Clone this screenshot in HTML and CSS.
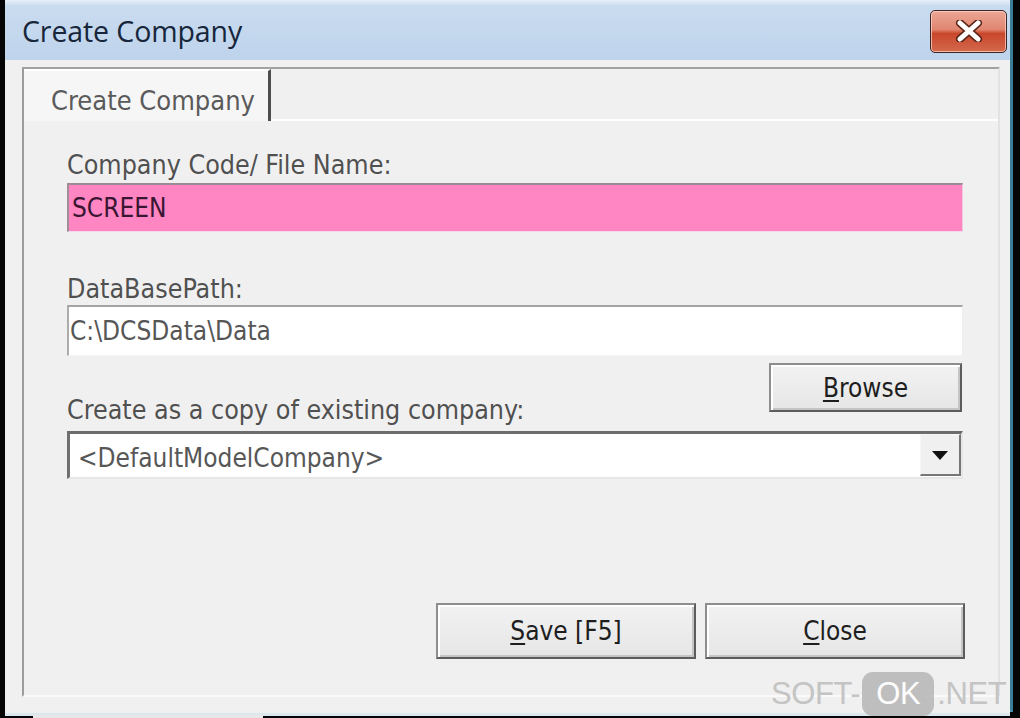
FILE: index.html
```html
<!DOCTYPE html>
<html>
<head>
<meta charset="utf-8">
<link rel="stylesheet" href="styles.css">
</head>
<body>
<div class="window">
  <div class="titlebar">
    <span class="title">Create Company</span>
    <div class="xbtn">
      <svg width="30" height="22" viewBox="0 0 30 22">
        <path d="M6 3 L24 19 M24 3 L6 19" stroke="#5a2418" stroke-width="8" stroke-linecap="round" fill="none"/>
        <path d="M6 3 L24 19 M24 3 L6 19" stroke="#ffffff" stroke-width="5" stroke-linecap="round" fill="none"/>
      </svg>
    </div>
  </div>
  <div class="client">
    <div class="tabctl">
      <div class="tabrow">
        <div class="tab">Create Company</div>
        <div class="tabfill"></div>
      </div>
      <div class="page">
        <div class="label">Company Code/ File Name:</div>
        <div class="field pink">SCREEN</div>
        <div class="label l2">DataBasePath:</div>
        <div class="field white">C:\DCSData\Data</div>
        <div class="row">
          <div class="label l3">Create as a copy of existing company:</div>
          <div class="btn browse"><u>B</u>rowse</div>
        </div>
        <div class="combo">
          <span class="combo-text">&lt;DefaultModelCompany&gt;</span>
          <div class="drop"><span class="arrow"></span></div>
        </div>
        <div class="actions">
          <div class="btn big"><u>S</u>ave [F5]</div>
          <div class="btn big"><u>C</u>lose</div>
        </div>
      </div>
    </div>
  </div>
</div>
<div class="taskstrip"></div>
<div class="watermark"><span class="wm">SOFT-</span><span class="ok">OK</span><span class="wm">.NET</span></div>
</body>
</html>
```

FILE: styles.css
```css
html, body {
  margin: 0;
  padding: 0;
  background: #050505;
  width: 1020px;
  height: 718px;
  overflow: hidden;
}
body {
  position: relative;
}
.window {
  margin-left: 5px;
  width: 1005px;
  height: 709px;
  border-right: 3px solid #3a7f96;
  border-bottom: 3px solid #4b93a9;
  background: #eef1f4;
  display: flex;
  flex-direction: column;
}
.titlebar {
  height: 60px;
  flex: none;
  background: linear-gradient(#e6eef8 0px, #c9dbef 6px, #bed4ec 100%);
  display: flex;
  align-items: center;
  padding-left: 17px;
  padding-right: 3px;
  box-sizing: border-box;
}
.title {
  font-family: "Open Sans", "DejaVu Sans", sans-serif;
  font-size: 28.5px;
  color: #17263a;
  letter-spacing: -0.1px;
  margin-top: 1px;
}
.xbtn {
  margin-left: auto;
  width: 75px;
  height: 41px;
  margin-top: 2px;
  border: 1px solid #3c2424;
  border-radius: 5px;
  background: linear-gradient(#eca696 0%, #e08670 45%, #c9472c 55%, #d4694c 100%);
  box-shadow: inset 0 0 0 1px rgba(255,220,210,0.7);
  display: flex;
  align-items: center;
  justify-content: center;
}
.client {
  flex: 1;
  background: #f0f0f0;
  padding: 7px 10px 16px 17px;
  border-bottom: 3px solid #dbe8f0;
}
.tabctl {
  height: 626px;
  border-top: 2px solid #a2a2a2;
  border-left: 2px solid #9c9c9c;
  border-right: 2px solid #e2e2e2;
  border-bottom: 2px solid #fafafa;
  display: flex;
  flex-direction: column;
}
.tabrow {
  display: flex;
  height: 52px;
  flex: none;
}
.tab {
  width: 247px;
  background: #f6f6f6;
  border-top: 2px solid #ffffff;
  border-right: 3px solid #4e4e4e;
  font-family: "DejaVu Sans", sans-serif;
  font-stretch: condensed;
  font-size: 27px;
  line-height: 30px;
  color: #5a5a5a;
  padding-left: 27px;
  padding-top: 15px;
  box-sizing: border-box;
}
.tabfill {
  flex: 1;
  border-bottom: 2px solid #ffffff;
}
.page {
  padding: 29px 35px 0 43px;
  display: flex;
  flex-direction: column;
}
.label {
  font-family: "DejaVu Sans", sans-serif;
  font-stretch: condensed;
  font-size: 26.6px;
  line-height: 30px;
  color: #505050;
  white-space: nowrap;
}
.l2 {
  margin-top: 42px;
}
.field {
  font-family: "DejaVu Sans", sans-serif;
  font-stretch: condensed;
  font-size: 26px;
  display: flex;
  align-items: center;
  box-sizing: border-box;
}
.pink {
  margin-top: 3px;
  height: 49px;
  background: #ff86c2;
  color: #3a1633;
  border-top: 2px solid #9c8a94;
  border-left: 2px solid #a08e98;
  border-right: 1px solid #f2c6dc;
  border-bottom: 1px solid #f7d8e8;
  padding-left: 3px;
}
.white {
  margin-top: 1px;
  height: 51px;
  background: #ffffff;
  color: #565656;
  border-top: 2px solid #a4a4a4;
  border-left: 2px solid #acacac;
  border-right: 1px solid #eeeeee;
  border-bottom: 1px solid #f4f4f4;
  padding-left: 1px;
}
.row {
  margin-top: 7px;
  height: 62px;
  display: flex;
  justify-content: space-between;
  align-items: flex-start;
}
.l3 {
  align-self: flex-end;
  margin-bottom: 0px;
}
.btn {
  font-family: "DejaVu Sans", sans-serif;
  font-stretch: condensed;
  font-size: 26px;
  color: #1e1e1e;
  background: linear-gradient(#f2f2f2, #e6e6e6);
  border: 2px solid #8e8e8e;
  border-right-color: #5c5c5c;
  border-bottom-color: #5c5c5c;
  box-shadow: inset 2px 2px 0 #ffffff, inset -2px -2px 0 #c4c4c4;
  display: flex;
  align-items: center;
  justify-content: center;
  box-sizing: border-box;
}
.btn u {
  text-decoration-thickness: 2px;
  text-underline-offset: 3px;
}
.browse {
  width: 193px;
  height: 49px;
  margin-right: 1px;
}
.combo {
  margin-top: 6px;
  height: 48px;
  background: #ffffff;
  border-top: 3px solid #6c6c6c;
  border-left: 3px solid #707070;
  border-right: 2px solid #e6e6e6;
  border-bottom: 2px solid #e6e6e6;
  display: flex;
  align-items: center;
  box-sizing: border-box;
}
.combo-text {
  font-family: "DejaVu Sans", sans-serif;
  font-stretch: condensed;
  font-size: 26px;
  color: #575757;
  padding-left: 8px;
  padding-top: 5px;
}
.drop {
  margin-left: auto;
  width: 41px;
  height: 42px;
  align-self: flex-start;
  background: #f0f0f0;
  border-top: 1px solid #f6f6f6;
  border-left: 1px solid #f6f6f6;
  border-right: 2px solid #777777;
  border-bottom: 2px solid #777777;
  box-sizing: border-box;
  display: flex;
  align-items: center;
  justify-content: center;
}
.arrow {
  width: 0;
  height: 0;
  border-left: 8px solid transparent;
  border-right: 8px solid transparent;
  border-top: 9px solid #111111;
  margin-top: 2px;
}
.actions {
  margin-top: 124px;
  display: flex;
  justify-content: flex-end;
  gap: 9px;
  margin-right: -2px;
}
.big {
  width: 260px;
  height: 56px;
}
.taskstrip {
  position: absolute;
  left: 33px;
  top: 715px;
  width: 230px;
  height: 3px;
  background: #e8e8e8;
}
.watermark {
  position: absolute;
  left: 771px;
  top: 672px;
  height: 44px;
  display: flex;
  align-items: center;
  font-family: "Liberation Sans", Arial, sans-serif;
  font-size: 31px;
  letter-spacing: -0.4px;
}
.wm {
  color: #c4c4c4;
}
.ok {
  margin: 0 3px 0 2px;
  background: #b9b9b9;
  color: #ffffff;
  border-radius: 11px;
  padding: 0 14px;
  height: 44px;
  display: flex;
  align-items: center;
  opacity: 0.9;
}
```
